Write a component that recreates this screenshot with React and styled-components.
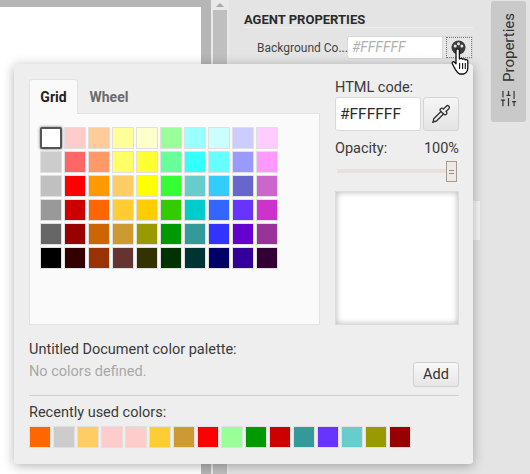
import styled, { createGlobalStyle } from "styled-components";
import { Pipette, SlidersVertical } from "lucide-react";

const GlobalStyle = createGlobalStyle`
  html, body { margin: 0; padding: 0; background: #e4e4e4; overflow: hidden; }
  * { box-sizing: border-box; }
  body { font-family: Roboto, "Liberation Sans", sans-serif; color: #333; }
`
const Page = styled.div`
  position: relative;
  display: flex;
  width: 530px;
  height: 474px;
  overflow: hidden;
`
const Canvas = styled.div`
  width: 211px;
  padding-top: 7px;
  background: #b6b6b6;
`
const Sheet = styled.div`
  width: 201px;
  height: 100%;
  background: #fff;
`
const Scrollbar = styled.div`
  width: 18px;
  padding: 0 2px;
  background: #e9e9e9;
`
const ScrollArrow = styled.div`
  width: 0;
  margin: 3px auto 3px;
  border-left: 4px solid transparent;
  border-right: 4px solid transparent;
  border-bottom: 4px solid #a8a8a8;
`
const ScrollThumb = styled.div`
  height: 100%;
  background: #bfbfbf;
`
const Panel = styled.div`
  width: 262px;
  padding: 12px 18px 0 15px;
`
const PanelTitle = styled.div`
  font-size: 13px;
  font-weight: 700;
  line-height: 15px;
  color: #2b2b2b;
  border-bottom: 1px solid #efefef;
`
const PanelRow = styled.div`
  display: flex;
  align-items: center;
  margin-top: 8px;
  padding-left: 13px;
`
const RowLabel = styled.div`
  width: 90px;
  font-size: 12px;
  color: #444;
  white-space: nowrap;
`
const RowInput = styled.div`
  width: 96px;
  height: 23px;
  padding-left: 4px;
  font-size: 14px;
  font-style: italic;
  line-height: 21px;
  color: #b0b0b0;
  background: #fff;
  border: 1px solid #d8d8d8;
  border-radius: 3px 0 0 3px;
`
const RowButton = styled.div`
  width: 30px;
  height: 23px;
  padding-left: 3px;
  background: #e6e6e6;
  border: 1px solid #d8d8d8;
  border-left: 0;
`
const FocusRing = styled.div`
  display: flex;
  align-items: center;
  justify-content: center;
  height: 100%;
  padding-right: 2px;
  border: 1px dotted #777;
`
const SideStrip = styled.div`
  flex: 1;
  padding: 1px 4px 0 0;
`
const SideTab = styled.div`
  display: flex;
  flex-direction: column;
  align-items: center;
  width: 35px;
  height: 121px;
  padding-top: 12px;
  background: #c9c9c9;
  border-radius: 3px;
  color: #333;
`
const SideLabel = styled.div`
  writing-mode: vertical-rl;
  transform: rotate(180deg);
  font-size: 15px;
  line-height: 16px;
  height: 69px;
  margin-bottom: 7px;
`
const StrayBlock = styled.div`
  position: absolute;
  left: 473px;
  top: 201px;
  width: 7px;
  height: 39px;
  background: #f6f6f6;
`
const Popup = styled.div`
  position: absolute;
  left: 14px;
  top: 64px;
  width: 459px;
  height: 400px;
  padding: 15px 14px 0 15px;
  background: #eeeeee;
  border-radius: 3px;
  box-shadow: 0 2px 12px rgba(0, 0, 0, 0.3);
`
const TopArea = styled.div`
  display: flex;
  justify-content: space-between;
  height: 246px;
`
const Tabs = styled.div`
  display: flex;
  flex-direction: column;
  width: 291px;
`
const TabBar = styled.div`
  display: flex;
  height: 34px;
`
const Tab = styled.div`
  width: ${p => (p.$active ? "49px" : "62px")};
  padding-top: 8px;
  text-align: center;
  font-size: 14px;
  font-weight: 700;
  line-height: 18px;
  color: ${p => (p.$active ? "#222" : "#6b6b6b")};
  background: ${p => (p.$active ? "#fafafa" : "transparent")};
  border: 1px solid ${p => (p.$active ? "#e2e2e2" : "transparent")};
  border-bottom: 0;
  border-radius: 3px 3px 0 0;
  margin-bottom: ${p => (p.$active ? "-1px" : "0")};
  position: relative;
`
const GridPane = styled.div`
  flex: 1;
  padding: 13px 0 0 10px;
  background: #fafafa;
  border: 1px solid #e2e2e2;
`
const Swatches = styled.div`
  display: grid;
  grid-template-columns: repeat(10, 22px);
  grid-auto-rows: 22px;
  gap: 2px;
`
const Swatch = styled.div`
  width: 22px;
  height: 22px;
  border: 1px solid #e0e0e0;
  background: ${p => p.$color};
`
const SelectedSwatch = styled(Swatch)`
  border: 2px solid #555;
  border-radius: 2px;
  box-shadow: 0 0 3px rgba(0, 0, 0, 0.6);
`
const SideColumn = styled.div`
  display: flex;
  flex-direction: column;
  width: 124px;
`
const FieldLabel = styled.div`
  font-size: 14.5px;
  line-height: 18px;
  color: #3a3a3a;
`
const CodeRow = styled.div`
  display: flex;
  gap: 2px;
`
const CodeInput = styled.div`
  width: 86px;
  height: 34px;
  padding-left: 4px;
  font-size: 15.5px;
  line-height: 32px;
  color: #2a2a2a;
  background: #fff;
  border: 1px solid #d8d8d8;
  border-radius: 3px;
`
const PickerButton = styled.div`
  display: flex;
  align-items: center;
  justify-content: center;
  width: 36px;
  height: 34px;
  color: #333;
  background: linear-gradient(#f5f5f5, #e4e4e4);
  border: 1px solid #d4d4d4;
  border-radius: 3px;
`
const OpacityRow = styled.div`
  display: flex;
  justify-content: space-between;
  margin-top: 9px;
`
const SliderTrack = styled.div`
  position: relative;
  height: 4px;
  margin: 11px 2px 0 2px;
  background: #e8e0dc;
`
const SliderThumb = styled.div`
  position: absolute;
  right: 0;
  top: -8px;
  display: flex;
  flex-direction: column;
  align-items: center;
  justify-content: center;
  gap: 2px;
  width: 11px;
  height: 21px;
  background: #efe9e4;
  border: 1px solid #a39c90;
  &::before, &::after { content: ""; width: 5px; height: 1px; background: #8f8f8f; }
`
const Preview = styled.div`
  height: 135px;
  margin-top: 18px;
  background: #fff;
  border: 1px solid #dcdcdc;
  box-shadow: inset 0 0 6px rgba(0, 0, 0, 0.3);
`
const PaletteBlock = styled.div`
  display: flex;
  justify-content: space-between;
  align-items: flex-end;
  height: 71px;
  padding-bottom: 8px;
  border-bottom: 1px solid #cfcfcf;
`
const PaletteText = styled.div`
  display: flex;
  flex-direction: column;
  gap: 4px;
  padding-bottom: 6px;
`
const EmptyText = styled.div`
  font-size: 14.5px;
  line-height: 18px;
  color: #a8a8a8;
`
const AddButton = styled.div`
  width: 46px;
  height: 25px;
  text-align: center;
  font-size: 14.5px;
  line-height: 23px;
  color: #333;
  background: linear-gradient(#f8f8f8, #e6e6e6);
  border: 1px solid #cfcfcf;
  border-radius: 3px;
`
const RecentBlock = styled.div`
  padding-top: 8px;
`
const RecentRow = styled.div`
  display: flex;
  gap: 2px;
  margin-top: 4px;
`

const HandCursor = styled.svg`
  position: absolute;
  left: 450px;
  top: 47px;
`

const gridColors = [
  "#ffffff", "#ffcccc", "#ffcc99", "#ffff99", "#ffffcc", "#99ff99", "#99ffff", "#ccffff", "#ccccff", "#ffccff",
  "#cccccc", "#ff6666", "#ff9966", "#ffff66", "#ffff33", "#66ff99", "#33ffff", "#66ffff", "#9999ff", "#ff99ff",
  "#c0c0c0", "#ff0000", "#ff9900", "#ffcc66", "#ffff00", "#33ff33", "#66cccc", "#33ccff", "#6666cc", "#cc66cc",
  "#999999", "#cc0000", "#ff6600", "#ffcc33", "#ffcc00", "#33cc00", "#00cccc", "#3366ff", "#6633ff", "#cc33cc",
  "#666666", "#990000", "#cc6600", "#cc9933", "#999900", "#009900", "#339999", "#3333ff", "#6600cc", "#993399",
  "#000000", "#330000", "#993300", "#663333", "#333300", "#003300", "#003333", "#000066", "#330099", "#330033",
]
const recentColors = [
  "#ff6600", "#cccccc", "#ffcc66", "#ffcccc", "#ffcccc", "#ffcc33", "#cc9933", "#ff0000",
  "#99ff99", "#009900", "#cc0000", "#339999", "#6633ff", "#66cccc", "#999900", "#990000",
]

const PaletteIcon = () => (
  <svg width="15" height="15" viewBox="0 0 15 15">
    <circle cx="7.5" cy="7.5" r="7" fill="#3c3c3c" />
    <circle cx="4.2" cy="6" r="1.5" fill="#e6e6e6" />
    <circle cx="7.5" cy="3.8" r="1.5" fill="#e6e6e6" />
    <circle cx="10.8" cy="6" r="1.5" fill="#e6e6e6" />
  </svg>
)

const App = () => {
  return (
    <Page>
      <GlobalStyle />
      <Canvas><Sheet /></Canvas>
      <Scrollbar>
        <ScrollArrow />
        <ScrollThumb />
      </Scrollbar>
      <Panel>
        <PanelTitle>AGENT PROPERTIES</PanelTitle>
        <PanelRow>
          <RowLabel>Background Co...</RowLabel>
          <RowInput>#FFFFFF</RowInput>
          <RowButton>
            <FocusRing><PaletteIcon /></FocusRing>
          </RowButton>
        </PanelRow>
      </Panel>
      <SideStrip>
        <SideTab>
          <SideLabel>Properties</SideLabel>
          <SlidersVertical size={19} strokeWidth={1.5} />
        </SideTab>
      </SideStrip>
      <StrayBlock />
      <Popup>
        <TopArea>
          <Tabs>
            <TabBar>
              <Tab $active>Grid</Tab>
              <Tab>Wheel</Tab>
            </TabBar>
            <GridPane>
              <Swatches>
                {gridColors.map((c, i) =>
                  i === 0 ? <SelectedSwatch key={i} $color={c} /> : <Swatch key={i} $color={c} />
                )}
              </Swatches>
            </GridPane>
          </Tabs>
          <SideColumn>
            <FieldLabel>HTML code:</FieldLabel>
            <CodeRow>
              <CodeInput>#FFFFFF</CodeInput>
              <PickerButton><Pipette size={20} strokeWidth={1.6} /></PickerButton>
            </CodeRow>
            <OpacityRow>
              <FieldLabel>Opacity:</FieldLabel>
              <FieldLabel>100%</FieldLabel>
            </OpacityRow>
            <SliderTrack>
              <SliderThumb />
            </SliderTrack>
            <Preview />
          </SideColumn>
        </TopArea>
        <PaletteBlock>
          <PaletteText>
            <FieldLabel>Untitled Document color palette:</FieldLabel>
            <EmptyText>No colors defined.</EmptyText>
          </PaletteText>
          <AddButton>Add</AddButton>
        </PaletteBlock>
        <RecentBlock>
          <FieldLabel>Recently used colors:</FieldLabel>
          <RecentRow>
            {recentColors.map((c, i) => <Swatch key={i} $color={c} />)}
          </RecentRow>
        </RecentBlock>
      </Popup>
      <HandCursor width="22" height="30" viewBox="0 0 22 30">
        <path
          d="M6 3.5a1.7 1.7 0 0 1 3.4 0V12l.6-.2a1.7 1.7 0 0 1 2.6.5 1.7 1.7 0 0 1 2.6.6 1.7 1.7 0 0 1 2.6 1v6.5c0 3-1.6 5.6-4 6.6H9.5c-1.5-.8-2.7-2.3-4-4.4L2.4 17c-1-1.7 1-3 2.2-1.7L6 16.8Z"
          fill="#fff"
          stroke="#111"
          strokeWidth="1.3"
          strokeLinejoin="round"
        />
        <path d="M9.6 16v6M12.6 16v6M15.3 16v6" stroke="#111" strokeWidth="1.1" fill="none" />
      </HandCursor>
    </Page>
  )
}

export default App
